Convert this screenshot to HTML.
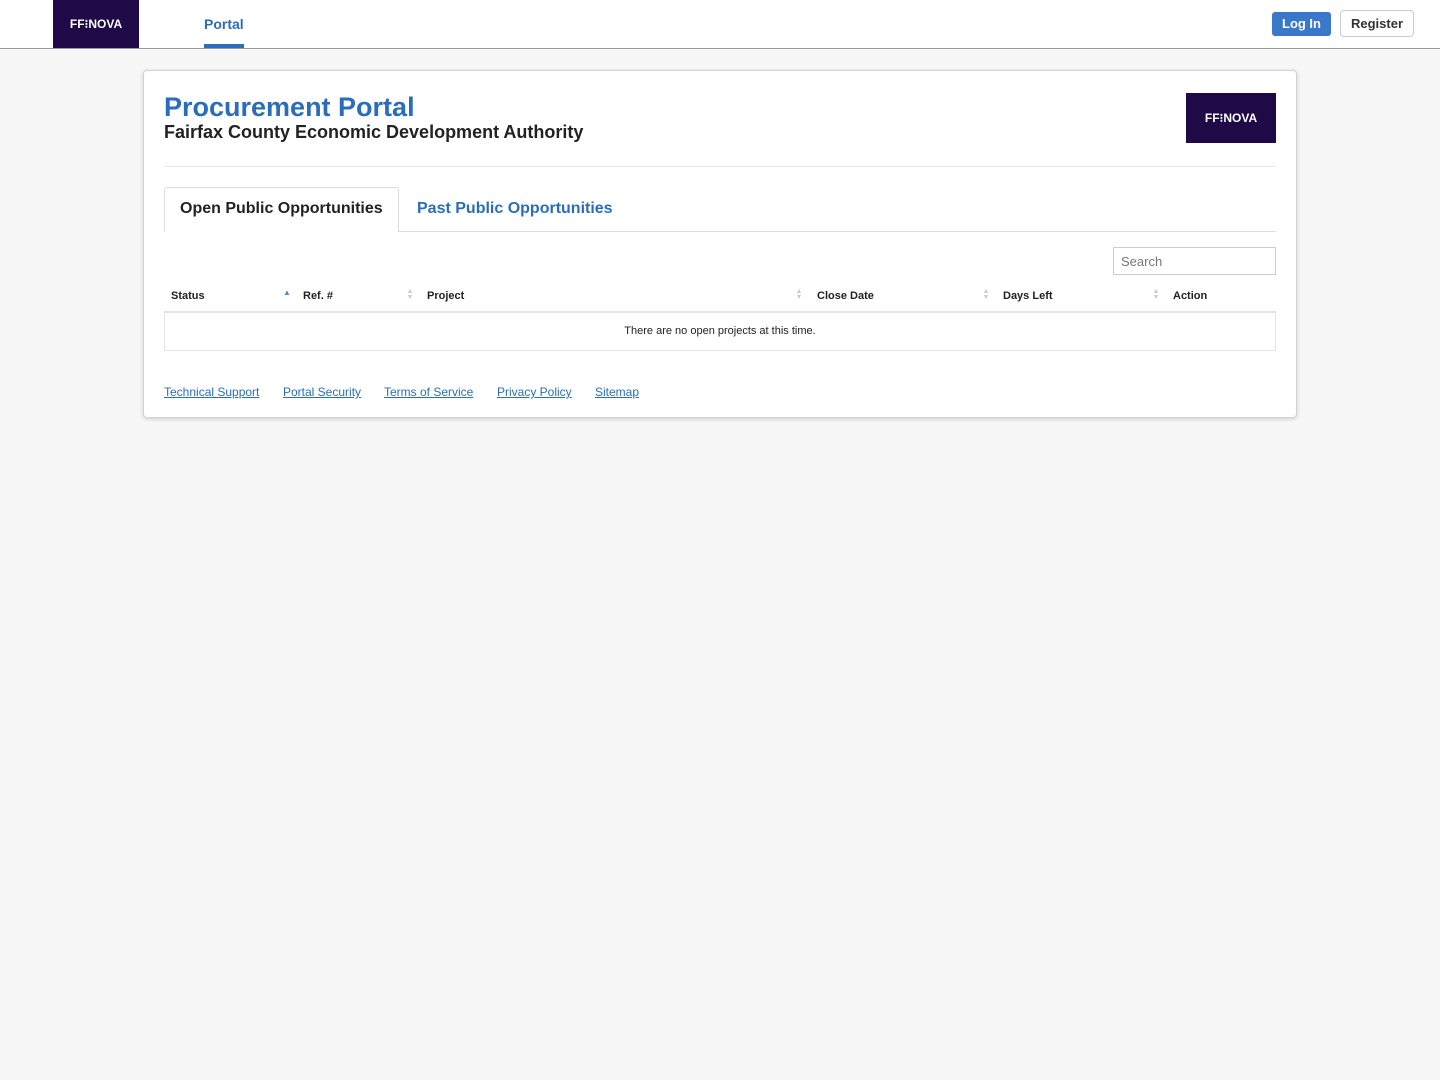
<!DOCTYPE html>
<html><head><style>
*{box-sizing:border-box;margin:0;padding:0}
body{width:1440px;height:1080px;background:#f7f7f7;font-family:"Liberation Sans",Arial,sans-serif;position:relative;overflow:hidden}
.top{position:absolute;left:0;top:0;width:1440px;height:49px;background:#fff;border-bottom:1px solid #9a9a9a}
.logo{position:absolute;background:#1f0a47;color:#fff;font-weight:bold;display:flex;align-items:center;justify-content:center;letter-spacing:0}
.abs{position:absolute}
.card{position:absolute;left:143px;top:70px;width:1154px;height:348px;background:#fff;border:1px solid #d4d4d4;border-radius:4px;box-shadow:0 1px 4px rgba(0,0,0,.18)}
.th{position:absolute;top:290px;font-size:11px;font-weight:bold;color:#222}
.sort{position:absolute;top:289px;font-size:7px;line-height:6px;color:#ccc;width:8px;text-align:center}
.ft{position:absolute;top:385px;font-size:12px;color:#2a6ebb;text-decoration:underline}
</style></head><body>
<div class="top">
 <div class="logo" style="left:53px;top:0;width:86px;height:48px;font-size:12px">FF⁝NOVA</div>
 <div class="abs" style="left:204px;top:16px;font-size:14px;font-weight:bold;color:#2a6ebb">Portal</div>
 <div class="abs" style="left:204px;top:44px;width:40px;height:4px;background:#2a6ebb"></div>
 <div class="abs" style="left:1272px;top:12px;width:59px;height:24px;background:#3a78c9;border-radius:3px;color:#fff;font-size:13px;font-weight:bold;text-align:center;line-height:24px">Log In</div>
 <div class="abs" style="left:1340px;top:10px;width:74px;height:27px;background:#fff;border:1px solid #ccc;border-radius:4px;color:#333;font-size:13px;font-weight:bold;text-align:center;line-height:25px">Register</div>
</div>
<div class="card"></div>
<div class="abs" style="left:164px;top:92px;font-size:27px;font-weight:bold;color:#2a6ebb">Procurement Portal</div>
<div class="abs" style="left:164px;top:122px;font-size:18px;font-weight:bold;color:#222">Fairfax County Economic Development Authority</div>
<div class="logo" style="left:1186px;top:93px;width:90px;height:50px;font-size:12px">FF⁝NOVA</div>
<div class="abs" style="left:164px;top:166px;width:1112px;height:1px;background:#e8e8e8"></div>
<div class="abs" style="left:164px;top:231px;width:1112px;height:1px;background:#ddd"></div>
<div class="abs" style="left:164px;top:187px;width:235px;height:45px;background:#fff;border:1px solid #ddd;border-bottom:none;border-radius:3px 3px 0 0"></div>
<div class="abs" style="left:180px;top:200px;font-size:16px;font-weight:bold;color:#222">Open Public Opportunities</div>
<div class="abs" style="left:417px;top:200px;font-size:16px;font-weight:bold;color:#2a6ebb">Past Public Opportunities</div>
<div class="abs" style="left:1113px;top:247px;width:163px;height:28px;border:1px solid #ccc;font-size:13px;color:#777;padding:6px 7px">Search</div>
<div class="th" style="left:171px">Status</div>
<div class="abs" style="left:283px;top:288px;font-size:8px;color:#4a8bc4">▲</div>
<div class="th" style="left:303px">Ref. #</div>
<div class="sort" style="left:406px">▲<br>▼</div>
<div class="th" style="left:427px">Project</div>
<div class="sort" style="left:795px">▲<br>▼</div>
<div class="th" style="left:817px">Close Date</div>
<div class="sort" style="left:982px">▲<br>▼</div>
<div class="th" style="left:1003px">Days Left</div>
<div class="sort" style="left:1152px">▲<br>▼</div>
<div class="th" style="left:1173px">Action</div>
<div class="abs" style="left:164px;top:311px;width:1112px;height:40px;border:1px solid #e4e4e4;border-top:2px solid #e4e4e4"></div>
<div class="abs" style="left:164px;top:325px;width:1112px;text-align:center;font-size:11px;color:#222">There are no open projects at this time.</div>
<div class="ft" style="left:164px">Technical Support</div>
<div class="ft" style="left:283px">Portal Security</div>
<div class="ft" style="left:384px">Terms of Service</div>
<div class="ft" style="left:497px">Privacy Policy</div>
<div class="ft" style="left:595px">Sitemap</div>
</body></html>
